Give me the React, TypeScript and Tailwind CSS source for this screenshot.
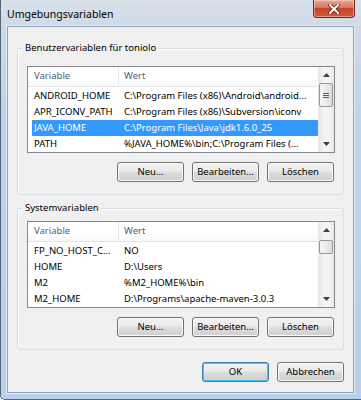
import React from "react";

type Row = { name: string; value: string };

const userVars: Row[] = [
  { name: "ANDROID_HOME", value: "C:\\Program Files (x86)\\Android\\android..." },
  { name: "APR_ICONV_PATH", value: "C:\\Program Files (x86)\\Subversion\\iconv" },
  { name: "JAVA_HOME", value: "C:\\Program Files\\Java\\jdk1.6.0_25" },
  { name: "PATH", value: "%JAVA_HOME%\\bin;C:\\Program Files (..." },
];

const systemVars: Row[] = [
  { name: "FP_NO_HOST_C...", value: "NO" },
  { name: "HOME", value: "D:\\Users" },
  { name: "M2", value: "%M2_HOME%\\bin" },
  { name: "M2_HOME", value: "D:\\Programs\\apache-maven-3.0.3" },
];

function Arrow({ up }: { up?: boolean }) {
  return (
    <div className="h-[16px] flex items-center justify-center">
      <svg width="7" height="4" viewBox="0 0 7 4">
        {up ? <path d="M0 4 L3.5 0 L7 4 Z" fill="#404040" /> : <path d="M0 0 L3.5 4 L7 0 Z" fill="#404040" />}
      </svg>
    </div>
  );
}

function ScrollBar({ thumbTop, thumbHeight, grip }: { thumbTop: number; thumbHeight: number; grip?: boolean }) {
  return (
    <div className="w-[16px] flex flex-col bg-[linear-gradient(90deg,#e6e6e6,#f4f4f4_40%,#f4f4f4_70%,#e8e8e8)]">
      <Arrow up />
      <div className="flex-1 relative">
        <div
          className="absolute left-[1px] right-[1px] rounded-[2px] border border-[#979797] bg-[linear-gradient(90deg,#f5f5f5,#ececec_50%,#dcdcdc)] flex flex-col items-center justify-center gap-[1px]"
          style={{ top: thumbTop, height: thumbHeight }}
        >
          {grip && (
            <>
              <div className="w-[6px] h-[1px] bg-[#5a5a5a]" />
              <div className="w-[6px] h-[1px] bg-[#5a5a5a]" />
              <div className="w-[6px] h-[1px] bg-[#5a5a5a]" />
            </>
          )}
        </div>
      </div>
      <Arrow />
    </div>
  );
}

function ListView({ rows, selected, thumbTop, thumbHeight, grip }: { rows: Row[]; selected?: number; thumbTop: number; thumbHeight: number; grip?: boolean }) {
  return (
    <div className="h-[87px] border border-[#828790] bg-white flex">
      <div className="flex-1 flex flex-col min-w-0">
        <div className="h-[22px] flex border-b border-[#e5e5e5] bg-[linear-gradient(#ffffff,#ffffff_60%,#f7f8fa)] text-[#4c607a]">
          <div className="w-[91px] pl-[6px] border-r border-[#e3e8ee] flex items-center">Variable</div>
          <div className="pl-[5px] flex items-center">Wert</div>
        </div>
        <div className="flex flex-col pt-[1px]">
          {rows.map((r, i) => (
            <div
              key={r.name}
              className={
                "ml-[4px] h-[16px] flex items-center whitespace-nowrap overflow-hidden " +
                (i === selected ? "bg-[#3399ff] text-white outline-1 outline-dotted outline-[#cc7a29] -outline-offset-1" : "text-black")
              }
            >
              <div className="w-[87px] pl-[2px] shrink-0">{r.name}</div>
              <div className="pl-[5px]">{r.value}</div>
            </div>
          ))}
        </div>
      </div>
      <ScrollBar thumbTop={thumbTop} thumbHeight={thumbHeight} grip={grip} />
    </div>
  );
}

function Btn({ label, def }: { label: string; def?: boolean }) {
  return (
    <div
      className={
        "w-[67px] h-[20px] rounded-[3px] border flex items-center justify-center text-black bg-[linear-gradient(#f2f2f2,#ebebeb_45%,#dddddd_50%,#cfcfcf)] " +
        (def ? "border-[#3c7fb1] shadow-[inset_0_0_0_1px_#48c6f4]" : "border-[#707070] shadow-[inset_0_0_0_1px_#fbfbfb]")
      }
    >
      {label}
    </div>
  );
}

function Group({ title, children, pt }: { title: string; children: React.ReactNode; pt: string }) {
  return (
    <div className={"relative border border-[#d5dfe5] rounded-[3px] shadow-[inset_1px_1px_0_#ffffff] pl-[9px] pr-[8px] pb-[12px] " + pt}>
      <div className="absolute -top-[8px] left-[5px] px-[2px] bg-[#f0f0f0] leading-[14px] text-black">{title}</div>
      {children}
    </div>
  );
}

export default function App() {
  return (
    <div className="w-[361px] h-[400px] overflow-hidden font-['Noto_Sans','Open_Sans',sans-serif] text-[9.5px] border-l border-b border-[#56657a] rounded-bl-[5px] bg-[linear-gradient(180deg,#d9e1ea_0%,#cdd9e6_8%,#bfd3ea_30%,#b9d0ea_100%)] flex flex-col">
      {/* title bar */}
      <div className="h-[26px] flex items-start justify-between">
        <div className="pl-[6px] pt-[6px] text-[10.5px] text-black leading-[16px]">Umgebungsvariablen</div>
        <div className="mr-[6px] w-[42px] h-[18px] rounded-b-[4px] border border-t-0 border-[#6b2a1f] bg-[linear-gradient(#e9a89a,#d8735f_45%,#c4412b_50%,#cf5a3f)] shadow-[inset_0_0_0_1px_rgba(255,220,210,0.5)] flex items-center justify-center">
          <svg width="12" height="10" viewBox="0 0 12 10">
            <path d="M2 1 L10 9 M10 1 L2 9" stroke="#5a2418" strokeWidth="3.6" strokeLinecap="square" />
            <path d="M2 1 L10 9 M10 1 L2 9" stroke="#ffffff" strokeWidth="2" strokeLinecap="square" />
          </svg>
        </div>
      </div>
      {/* client area */}
      <div className="ml-[6px] w-[347px] h-[367px] border border-[#8ea3bd] bg-[#f0f0f0] pl-[9px] pr-[9px] pt-[21px] flex flex-col shadow-[0_0_0_1px_#e4eef9]">
        <Group title="Benutzervariablen für toniolo" pt="pt-[17px]">
          <ListView rows={userVars} selected={2} thumbTop={0} thumbHeight={24} grip />
          <div className="mt-[9px] pr-[1px] flex justify-end gap-[8px]">
            <Btn label="Neu..." />
            <Btn label="Bearbeiten..." />
            <Btn label="Löschen" />
          </div>
        </Group>
        <div className="mt-[13px]">
          <Group title="Systemvariablen" pt="pt-[12px]">
            <ListView rows={systemVars} thumbTop={2} thumbHeight={14} />
            <div className="mt-[9px] pr-[1px] flex justify-end gap-[8px]">
              <Btn label="Neu..." />
              <Btn label="Bearbeiten..." />
              <Btn label="Löschen" />
            </div>
          </Group>
        </div>
        <div className="mt-[12px] flex justify-end gap-[8px]">
          <Btn label="OK" def />
          <Btn label="Abbrechen" />
        </div>
      </div>
    </div>
  );
}
